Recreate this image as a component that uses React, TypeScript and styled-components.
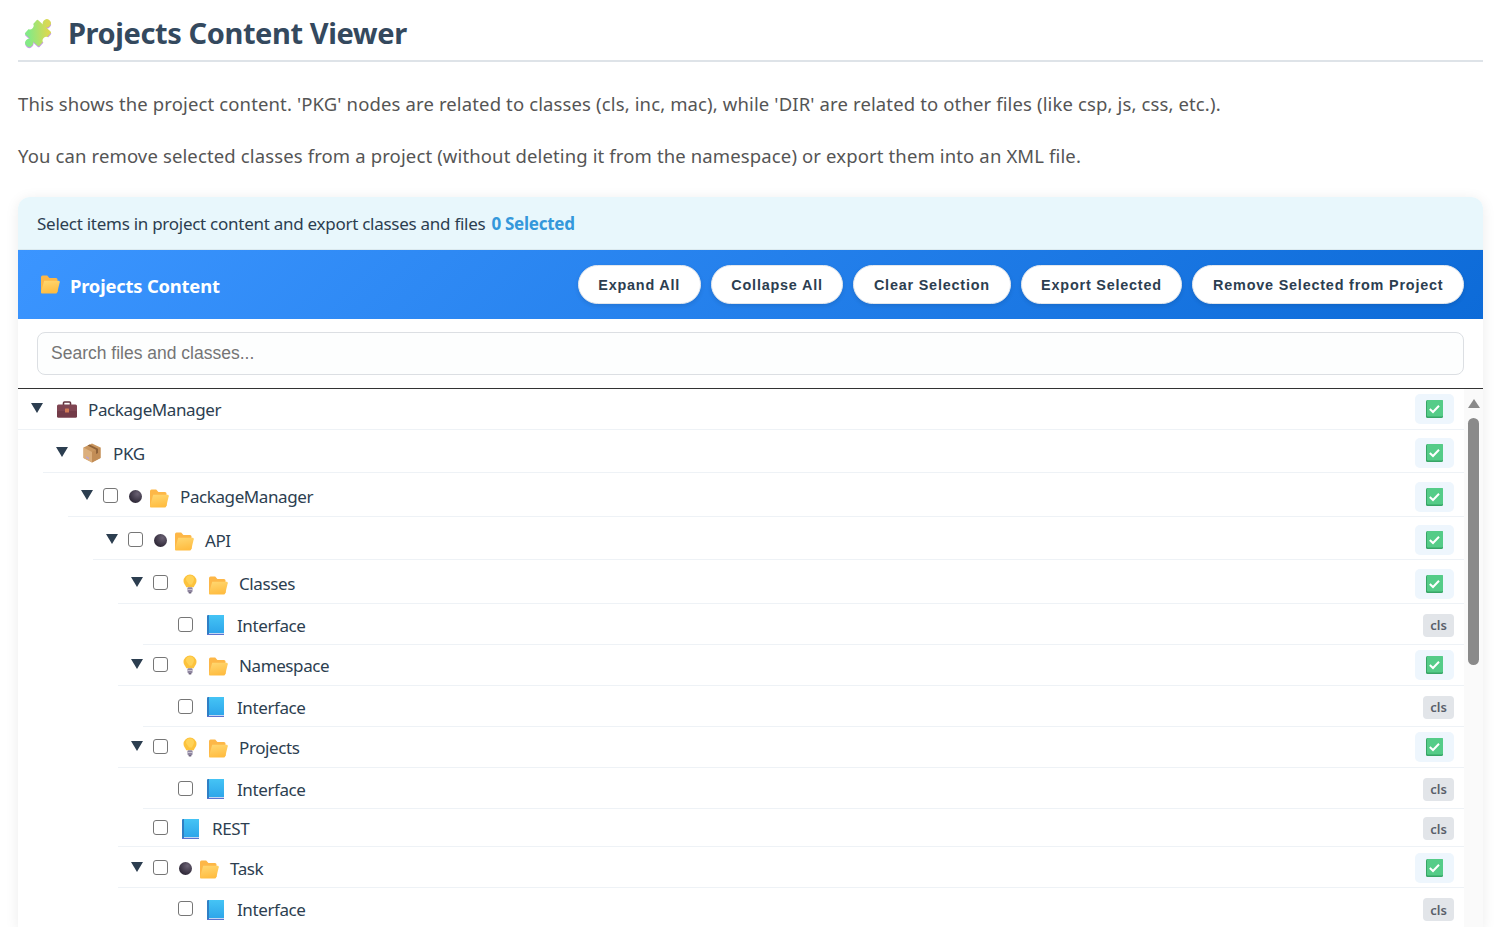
import React from "react";
import styled, { createGlobalStyle } from "styled-components";

const Global = createGlobalStyle`
  html, body { margin: 0; padding: 0; height: 100%; overflow: hidden; background: #fff; }
  body { font-family: "Noto Sans", "Open Sans", sans-serif; color: #555; }
`;

const Page = styled.div`
  padding: 0 14px 0 18px;
  height: 927px;
  overflow: hidden;
  box-sizing: border-box;
`;
const TitleBar = styled.header`
  display: flex;
  align-items: center;
  border-bottom: 2px solid #dee3e8;
  padding-left: 3px;
  padding-top: 6px;
  height: 54px;
`;
const Title = styled.h1`
  margin: 0 0 0 13px;
  font-size: 29px;
  font-weight: 700;
  color: #34495e;
  letter-spacing: -0.4px;
  line-height: 40px;
`;
const Intro = styled.p`
  margin: 0;
  height: 52px;
  line-height: 52px;
  font-size: 18.5px;
  color: #555;
  white-space: nowrap;
  letter-spacing: 0.13px;
`;
const IntroBlock = styled.div`
  padding: 16px 0 15px;
`;
const Card = styled.section`
  border-radius: 12px 12px 0 0;
  box-shadow: 0 2px 14px rgba(0, 0, 0, 0.08);
  background: #fff;
  overflow: hidden;
`;
const InfoBar = styled.div`
  height: 53px;
  box-sizing: border-box;
  background: #e8f7fc;
  padding-left: 19px;
  display: flex;
  align-items: center;
  font-size: 17px;
  color: #2c3e50;
  letter-spacing: -0.27px;
  border-bottom: 1px solid #dbe9ee;
`;
const Count = styled.strong`
  color: #3498db;
  margin-left: 6px;
  font-weight: 700;
`;
const ContentHeader = styled.div`
  height: 69px;
  box-sizing: border-box;
  background: linear-gradient(135deg, #3b95ff 0%, #0d6bd8 100%);
  display: flex;
  align-items: center;
  padding: 0 19px 0 22px;
`;
const HeaderTitle = styled.h2`
  margin: 2px auto 0 10px;
  font-size: 18.4px;
  font-weight: 700;
  color: #fff;
  letter-spacing: -0.2px;
`;
const ButtonRow = styled.div`
  display: flex;
  gap: 10px;
`;
const Pill = styled.button`
  height: 39px;
  padding: 0 19.6px;
  border-radius: 20px;
  border: 1px solid #e3e7ec;
  background: #fff;
  color: #2c3e50;
  font-family: "Liberation Sans", Arial, sans-serif;
  font-size: 14.4px;
  font-weight: 700;
  letter-spacing: 0.8px;
  box-shadow: 0 2px 4px rgba(0, 0, 0, 0.1);
  white-space: nowrap;
`;
const SearchArea = styled.div`
  height: 70px;
  box-sizing: border-box;
  padding: 13px 19px;
  border-bottom: 1px solid #333;
`;
const SearchInput = styled.input`
  width: 100%;
  height: 43px;
  box-sizing: border-box;
  border: 1px solid #dcdfe3;
  border-radius: 8px;
  background: #fdfefe;
  padding: 0 13px;
  font-family: "Liberation Sans", Arial, sans-serif;
  font-size: 17.5px;
  outline: none;
  &::placeholder { color: #757575; opacity: 1; }
`;
const TreeFrame = styled.div`
  display: flex;
  align-items: stretch;
`;
const TreeList = styled.div`
  flex: 1;
  min-width: 0;
`;
const Rail = styled.div`
  width: 19px;
  flex: none;
  background: #fafafa;
  display: flex;
  flex-direction: column;
  align-items: center;
  padding-top: 10px;
  box-sizing: border-box;
`;
const RailArrow = styled.div`
  width: 0;
  height: 0;
  border-left: 6px solid transparent;
  border-right: 6px solid transparent;
  border-bottom: 9px solid #8a8a8a;
`;
const RailThumb = styled.div`
  width: 11px;
  height: 247px;
  margin-top: 10px;
  border-radius: 6px;
  background: #8a8a8a;
`;
const NodeRow = styled.div<{ $depth: number; $height: number; $drop: number }>`
  margin-left: ${(p) => p.$depth * 25}px;
  height: ${(p) => p.$height}px;
  box-sizing: border-box;
  display: flex;
  align-items: center;
  padding: ${(p) => p.$drop}px 10px 0 13px;
  border-bottom: 1px solid #eef2f6;
`;
const Caret = styled.span`
  width: 0;
  height: 0;
  flex: none;
  border-left: 6px solid transparent;
  border-right: 6px solid transparent;
  border-top: 10px solid #2c3e50;
  margin-top: -3px;
`;
const CaretSpacer = styled.span`
  width: 12px;
  flex: none;
`;
const Check = styled.input`
  appearance: none;
  flex: none;
  width: 15px;
  height: 15px;
  margin: -2px 0 0 10px;
  border: 1.5px solid #767676;
  border-radius: 3px;
  background: #fff;
  box-sizing: border-box;
`;
const IconSlot = styled.span<{ $w: number; $ml: number; $top?: number }>`
  flex: none;
  display: flex;
  align-items: center;
  justify-content: center;
  width: ${(p) => p.$w}px;
  margin-left: ${(p) => p.$ml}px;
  margin-top: ${(p) => p.$top ?? 0}px;
`;
const Label = styled.span<{ $ml: number }>`
  margin-left: ${(p) => p.$ml}px;
  font-size: 17px;
  color: #2c3e50;
  letter-spacing: -0.4px;
  white-space: nowrap;
`;
const ActionTile = styled.span`
  margin-left: auto;
  width: 39px;
  height: 30px;
  border-radius: 5px;
  background: #eef6fd;
  display: flex;
  align-items: center;
  justify-content: center;
`;
const TypeBadge = styled.span`
  margin-left: auto;
  width: 31px;
  height: 23px;
  border-radius: 4px;
  background: #e2e5e9;
  color: #5a5f6a;
  font-size: 13px;
  font-weight: 600;
  display: flex;
  align-items: center;
  justify-content: center;
`;

const PuzzleShape = () => (
  <>
    <rect x="-8.5" y="-8.5" width="17" height="17" rx="1.2" />
    <rect x="-1.8" y="-11" width="3.6" height="4" />
    <rect x="-1.8" y="7" width="3.6" height="4" />
    <circle cx="0" cy="-11.6" r="3.5" />
    <circle cx="0" cy="11.6" r="3.5" />
  </>
);
const Puzzle = () => (
  <svg width="34" height="34" viewBox="1 1 30 30">
    <defs>
      <linearGradient id="pz" gradientUnits="userSpaceOnUse" x1="-12" y1="0" x2="0" y2="-12">
        <stop offset="0" stopColor="#84ea86" />
        <stop offset="1" stopColor="#d8d953" />
      </linearGradient>
    </defs>
    <g transform="translate(16 16) rotate(42)">
      <g fill="#c79ce6" transform="translate(.8 .7)"><PuzzleShape /></g>
      <g fill="url(#pz)"><PuzzleShape /></g>
      <circle cx="-9.6" cy="0" r="3.2" fill="#fff" />
      <circle cx="9.9" cy="0" r="3.2" fill="#fff" />
    </g>
  </svg>
);
const Folder = ({ w = 20 }: { w?: number }) => (
  <svg width={w} height={w * 0.95} viewBox="0 0 20 19">
    <defs>
      <linearGradient id="fd" x1="0" y1="0" x2="0.3" y2="1">
        <stop offset="0" stopColor="#ffd872" />
        <stop offset="1" stopColor="#ffbd42" />
      </linearGradient>
    </defs>
    <path d="M1 2.200Q1 .6 2.500 .6H7.200l2.200 2.400h6.600q1.500 0 1.500 1.500V17H1z" fill="#fdb747" />
    <path d="M4.200 5.800H18.600q1.400 0 1.100 1.400L17.400 17q-.4 1.500-1.800 1.500H2.200Q.6 18.500 1 17z" fill="url(#fd)" />
  </svg>
);
const Briefcase = () => (
  <svg width="20" height="17" viewBox="0 0 20 17">
    <path d="M6.500 4V2q0-1 1-1h5q1 0 1 1v2" fill="none" stroke="#63343f" strokeWidth="1.600" />
    <rect x="0" y="3.500" width="20" height="13" rx="1.500" fill="#7f4552" />
    <rect x="0" y="10" width="20" height="6.500" rx="1.200" fill="#733b48" />
    <rect x="8" y="7.500" width="4" height="4" rx=".5" fill="#d27a55" />
  </svg>
);
const Box = () => (
  <svg width="20" height="20" viewBox="0 0 19 20">
    <path d="M9.500 .5L18 4.500V15l-8.500 4.500L1 15V4.500z" fill="#c9965f" />
    <path d="M1 4.500l8.500 4.500V19.500L1 15z" fill="#dcaf7c" />
    <path d="M9.500 9L18 4.500V15l-8.500 4.500z" fill="#c28d56" />
    <path d="M5 2.500L13.500 6.700V11l2-1V5.700L7 1.500z" fill="#8f6238" />
    <path d="M3.500 13l3 1.500v2l-3-1.500z" fill="#bfa5c0" />
  </svg>
);
const Dot = () => (
  <svg width="13" height="13" viewBox="0 0 13 13">
    <defs>
      <radialGradient id="dt" cx="0.65" cy="0.3" r="0.75">
        <stop offset="0" stopColor="#6a6173" />
        <stop offset="1" stopColor="#2a2433" />
      </radialGradient>
    </defs>
    <circle cx="6.500" cy="6.500" r="6.500" fill="url(#dt)" />
  </svg>
);
const Bulb = () => (
  <svg width="14" height="20" viewBox="0 0 14 20">
    <path d="M7 .5A6.500 6.500 0 0 1 13.500 7c0 2.600-2 3.900-2.800 6.200H3.300C2.500 10.900 .5 9.600 .5 7A6.500 6.500 0 0 1 7 .5z" fill="#fcc23c" />
    <path d="M7 1.500a4 4 0 0 1 4 4c0 2-1.500 3-2 5H6c-.5-2-3-3-3-5a4 4 0 0 1 4-4z" fill="#ffd257" />
    <rect x="4.500" y="13.200" width="5" height="5" rx="1" fill="#8f86a0" />
    <rect x="4.500" y="15" width="5" height="1" fill="#c9c3d2" />
    <rect x="5.500" y="18" width="3" height="1.500" rx=".7" fill="#6f667e" />
  </svg>
);
const Book = () => (
  <svg width="17" height="20" viewBox="0 0 17 20">
    <defs>
      <linearGradient id="bk" x1="0" y1="0" x2="0" y2="1">
        <stop offset="0" stopColor="#45c4f5" />
        <stop offset="1" stopColor="#2ea6ea" />
      </linearGradient>
    </defs>
    <rect x="0" y="0" width="17" height="20" rx="1" fill="#2f7fc4" />
    <rect x="2" y="0" width="15" height="18" fill="url(#bk)" />
    <rect x="2" y="18" width="15" height="1" fill="#c5d6f2" />
    <rect x="0" y="19" width="17" height="1" fill="#5b72cf" />
  </svg>
);
const GreenCheck = () => (
  <svg width="17" height="18" viewBox="0 0 17 18">
    <rect x="0" y="0" width="17" height="18" rx="1.500" fill="#37a566" />
    <rect x="1" y="0" width="16" height="16.500" rx="1" fill="#55cc88" />
    <path d="M3.800 9l3.200 3L13 5.800" fill="none" stroke="#fff" strokeWidth="2" />
  </svg>
);

type Kind = "root" | "pkg" | "dir" | "bulb" | "file";
type NodeData = { label: string; depth: number; h: number; drop: number; kind: Kind };
const nodes: NodeData[] = [
  { label: "PackageManager", depth: 0, h: 41, drop: 0, kind: "root" },
  { label: "PKG", depth: 1, h: 43, drop: 4, kind: "pkg" },
  { label: "PackageManager", depth: 2, h: 44, drop: 4, kind: "dir" },
  { label: "API", depth: 3, h: 43, drop: 4, kind: "dir" },
  { label: "Classes", depth: 4, h: 44, drop: 4, kind: "bulb" },
  { label: "Interface", depth: 5, h: 41, drop: 2, kind: "file" },
  { label: "Namespace", depth: 4, h: 41, drop: 0, kind: "bulb" },
  { label: "Interface", depth: 5, h: 41, drop: 2, kind: "file" },
  { label: "Projects", depth: 4, h: 41, drop: 0, kind: "bulb" },
  { label: "Interface", depth: 5, h: 41, drop: 2, kind: "file" },
  { label: "REST", depth: 4, h: 38, drop: 2, kind: "file" },
  { label: "Task", depth: 4, h: 41, drop: 2, kind: "dir" },
  { label: "Interface", depth: 5, h: 41, drop: 3, kind: "file" },
];

const Node = ({ n }: { n: NodeData }) => {
  const isFile = n.kind === "file";
  return (
    <NodeRow $depth={n.depth} $height={n.h} $drop={n.drop}>
      {isFile ? <CaretSpacer /> : <Caret />}
      {n.kind === "root" && (
        <IconSlot $w={20} $ml={14}><Briefcase /></IconSlot>
      )}
      {n.kind === "pkg" && (
        <IconSlot $w={20} $ml={14}><Box /></IconSlot>
      )}
      {n.kind !== "root" && n.kind !== "pkg" && <Check type="checkbox" aria-label={n.label} />}
      {n.kind === "dir" && (
        <>
          <IconSlot $w={13} $ml={11}><Dot /></IconSlot>
          <IconSlot $w={20} $ml={7} $top={3}><Folder /></IconSlot>
        </>
      )}
      {n.kind === "bulb" && (
        <>
          <IconSlot $w={14} $ml={15}><Bulb /></IconSlot>
          <IconSlot $w={20} $ml={11} $top={3}><Folder /></IconSlot>
        </>
      )}
      {isFile && <IconSlot $w={17} $ml={14}><Book /></IconSlot>}
      <Label $ml={isFile ? 13 : 11}>{n.label}</Label>
      {isFile ? <TypeBadge>cls</TypeBadge> : <ActionTile><GreenCheck /></ActionTile>}
    </NodeRow>
  );
};

export default function App() {
  return (
    <Page>
      <Global />
      <TitleBar>
        <Puzzle />
        <Title>Projects Content Viewer</Title>
      </TitleBar>
      <IntroBlock>
        <Intro>This shows the project content. 'PKG' nodes are related to classes (cls, inc, mac), while 'DIR' are related to other files (like csp, js, css, etc.).</Intro>
        <Intro>You can remove selected classes from a project (without deleting it from the namespace) or export them into an XML file.</Intro>
      </IntroBlock>
      <Card>
        <InfoBar>
          Select items in project content and export classes and files
          <Count>0 Selected</Count>
        </InfoBar>
        <ContentHeader>
          <Folder w={20} />
          <HeaderTitle>Projects Content</HeaderTitle>
          <ButtonRow>
            <Pill>Expand All</Pill>
            <Pill>Collapse All</Pill>
            <Pill>Clear Selection</Pill>
            <Pill>Export Selected</Pill>
            <Pill>Remove Selected from Project</Pill>
          </ButtonRow>
        </ContentHeader>
        <SearchArea>
          <SearchInput placeholder="Search files and classes..." />
        </SearchArea>
        <TreeFrame>
          <TreeList>
            {nodes.map((n, i) => <Node key={i} n={n} />)}
          </TreeList>
          <Rail>
            <RailArrow />
            <RailThumb />
          </Rail>
        </TreeFrame>
      </Card>
    </Page>
  );
}
